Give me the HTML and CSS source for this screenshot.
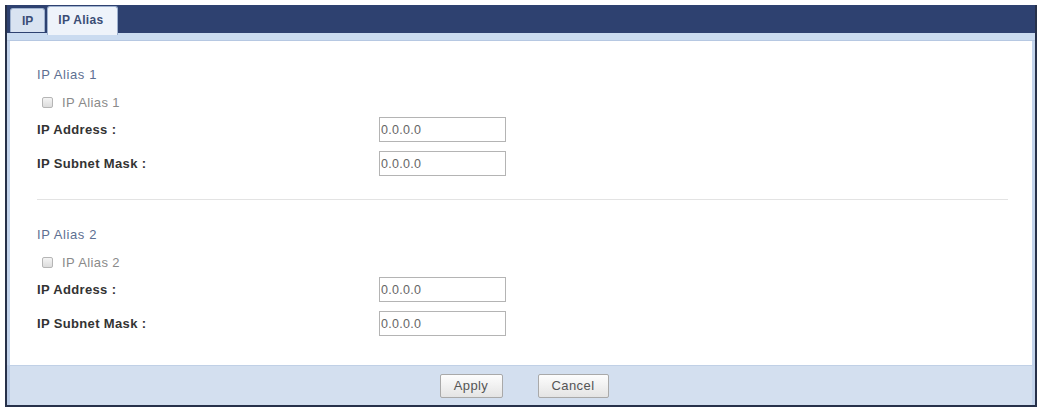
FILE: index.html
```html
<!DOCTYPE html>
<html lang="en">
<head>
  <meta charset="UTF-8">
  <meta name="viewport" content="width=device-width, initial-scale=1.0">
  <title>IP Alias</title>
  <link rel="stylesheet" href="styles.css">
</head>
<body>
<div class="panel">
  <div class="tabbar">
    <a class="tab">IP</a>
    <a class="tab active">IP Alias</a>
  </div>
  <div class="strip"></div>
  <div class="content">
    <div class="alias">
      <h4>IP Alias 1</h4>
      <label class="check"><input type="checkbox" id="alias1"> IP Alias 1</label>
      <div class="row">
        <span class="label">IP Address :</span>
        <input type="text" value="0.0.0.0">
      </div>
      <div class="row">
        <span class="label">IP Subnet Mask :</span>
        <input type="text" value="0.0.0.0">
      </div>
    </div>
    <hr>
    <div class="alias">
      <h4>IP Alias 2</h4>
      <label class="check"><input type="checkbox" id="alias2"> IP Alias 2</label>
      <div class="row">
        <span class="label">IP Address :</span>
        <input type="text" value="0.0.0.0">
      </div>
      <div class="row">
        <span class="label">IP Subnet Mask :</span>
        <input type="text" value="0.0.0.0">
      </div>
    </div>
  </div>
  <div class="footer">
    <button class="apply">Apply</button>
    <button class="cancel">Cancel</button>
  </div>
</div>
</body>
</html>
```

FILE: styles.css
```css
body {
  font-family: 'Liberation Sans', Arial, sans-serif;
  margin: 0;
  padding: 5px 0 0 5px;
  background: #fff;
  color: #333;
}
.panel {
  width: 1028px;
  border: 2px solid #27314a;
  border-top: none;
}
.tabbar {
  background: #2e4170;
  height: 28px;
  display: flex;
  align-items: flex-end;
  padding-left: 3px;
  gap: 2px;
}
.tab {
  font-size: 12px;
  font-weight: bold;
  color: #3b4d75;
  background: #d9e3f1;
  border: 1px solid #9fb2cf;
  border-bottom: none;
  border-radius: 3px 3px 0 0;
  height: 24px;
  line-height: 24px;
  padding: 0 11px;
  box-sizing: border-box;
  margin-bottom: 1px;
}
.tab.active {
  background: #eef3fa;
  height: 29px;
  line-height: 27px;
  margin-bottom: -2px;
  padding: 0 10px;
  width: 71px;
  letter-spacing: 0.3px;
}
.strip {
  height: 7px;
  background: #cadbf0;
  border-bottom: 1px solid #b6c8e2;
}
.content {
  background: #fff;
  border-left: 3px solid #c3d4ec;
  border-right: 3px solid #c3d4ec;
  padding: 26px 24px 29px 27px;
}
h4 {
  margin: 0;
  font-size: 13px;
  font-weight: normal;
  color: #5d6f92;
  line-height: 16px;
  letter-spacing: 0.6px;
}
.check {
  display: flex;
  align-items: center;
  height: 20px;
  margin-top: 9px;
  padding-left: 5px;
  font-size: 13px;
  color: #8a8a8a;
  gap: 9px;
  letter-spacing: 0.4px;
}
.check input {
  appearance: none;
  margin: 0;
  width: 11px;
  height: 11px;
  border: 1px solid #b5b5b5;
  border-radius: 2px;
  background: linear-gradient(#f4f4f4, #dcdcdc);
}
.row {
  display: flex;
  align-items: center;
  margin-top: 5px;
}
.row + .row {
  margin-top: 9px;
}
.label {
  width: 342px;
  font-size: 13px;
  font-weight: bold;
  color: #333;
  letter-spacing: 0.35px;
}
.row input {
  width: 127px;
  height: 25px;
  box-sizing: border-box;
  border: 1px solid #b4b4b4;
  padding: 0 0 0 1px;
  font-family: inherit;
  font-size: 12.5px;
  color: #666;
  letter-spacing: 0.3px;
}
hr {
  border: none;
  border-top: 1px solid #e3e3e3;
  margin: 23px 0 0;
}
hr + .alias h4 {
  margin-top: 27px;
}
.footer {
  background: #d3dfef;
  border-top: 1px solid #c0d0e6;
  border-left: 3px solid #b9cbe6;
  border-right: 3px solid #c3d4ec;
  height: 39px;
  display: flex;
  align-items: center;
  justify-content: center;
  gap: 35px;
  padding-left: 6px;
}
button {
  height: 24px;
  font-family: inherit;
  font-size: 13px;
  color: #555;
  background: linear-gradient(#fdfdfd, #e4e4e4);
  border: 1px solid #a9a9a9;
  border-radius: 2px;
  padding: 0;
  letter-spacing: 0.4px;
}
.apply {
  width: 63px;
}
.cancel {
  width: 71px;
}
```
